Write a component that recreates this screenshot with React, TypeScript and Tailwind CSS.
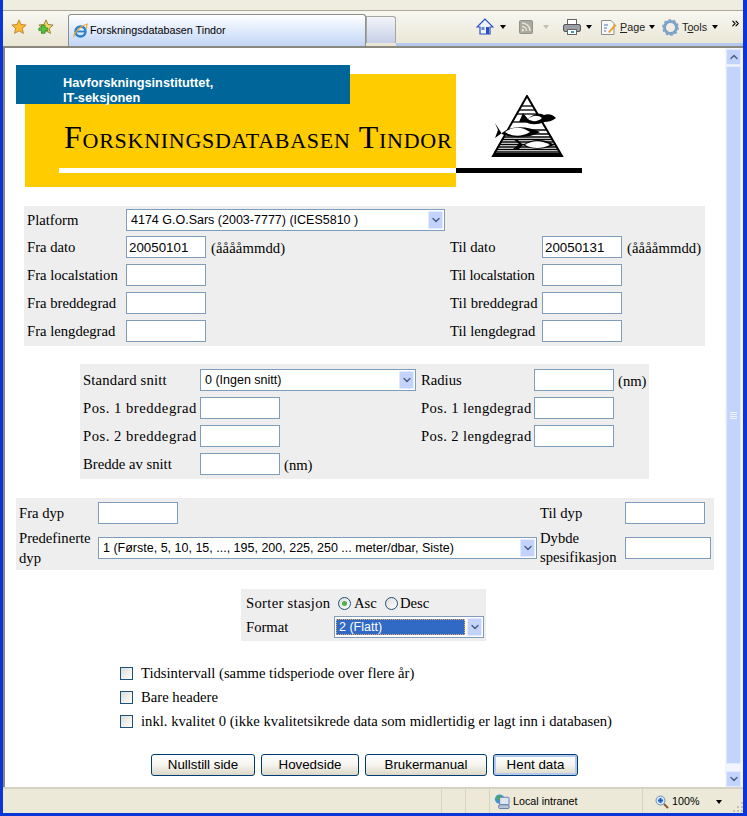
import { ChevronDown, ChevronUp, ChevronsRight } from "lucide-react";
import type { ReactNode } from "react";

const serif = "font-['Liberation_Serif',serif]";

const Input = ({ value = "", className = "w-[80px]" }: { value?: string; className?: string }) => (
  <input
    readOnly
    value={value}
    className={`h-[22px] border border-[#7f9db9] bg-white px-[2px] font-['Liberation_Sans',sans-serif] text-[13.33px] text-black outline-none ${className}`}
  />
);

const ArrowBtn = () => (
  <div className="flex h-[18px] w-[15px] shrink-0 items-center justify-center rounded-[1px] border border-[#e1eafe] bg-[#c3d3fb]">
    <ChevronDown size={12} strokeWidth={3} className="text-[#4d6185]" />
  </div>
);

const Select = ({ value, className, selected }: { value: string; className: string; selected?: boolean }) => (
  <div className={`flex h-[22px] items-center justify-between border border-[#7f9db9] bg-white px-[1px] font-['Liberation_Sans',sans-serif] text-[12.5px] ${className}`}>
    {selected ? (
      <span className="mr-[2px] flex h-[16px] flex-1 items-center border border-dotted border-[#e8b060] bg-[#316ac5] pl-[2px] text-white">{value}</span>
    ) : (
      <span className="pl-[3px] text-black">{value}</span>
    )}
    <ArrowBtn />
  </div>
);

const Label = ({ children, className = "" }: { children: ReactNode; className?: string }) => (
  <span className={`text-[14.67px] leading-[17px] text-black ${className}`}>{children}</span>
);

const Radio = ({ checked }: { checked?: boolean }) => (
  <span className="flex h-[13px] w-[13px] items-center justify-center rounded-full border border-[#1c5180] bg-gradient-to-br from-[#dcdcd7] to-white">
    {checked && <span className="h-[5px] w-[5px] rounded-full bg-[#4cb04c]" />}
  </span>
);

const Check = ({ label }: { label: string }) => (
  <div className="flex h-[24px] items-center">
    <span className="h-[13px] w-[13px] border border-[#1c5180] bg-gradient-to-br from-[#dcdcd7] to-white" />
    <Label className="ml-[8px]">{label}</Label>
  </div>
);

const Btn = ({ label, className, active }: { label: string; className: string; active?: boolean }) => (
  <button className={`h-[22px] rounded-[3px] border border-[#003c74] bg-gradient-to-b from-white via-[#f5f4ee] to-[#dcd8c8] font-['Liberation_Sans',sans-serif] text-[13.33px] text-black ${active ? "shadow-[inset_0_0_0_2px_#b4c9ee]" : ""} ${className}`}>
    {label}
  </button>
);

const Logo = () => (
  <svg width="90" height="64" viewBox="0 0 90 64" className="block">
    <path d="M39 1 L5 61 L74 61 Z" fill="#fff" stroke="#000" strokeWidth="2" />
    {[11, 15, 19, 27, 35, 39, 42, 44.5, 47, 49.5, 52, 54.5, 57].map((y) => {
      const half = (y - 1) * 0.58;
      return <line key={y} x1={39 - half} x2={39 + half} y1={y} y2={y} stroke="#000" strokeWidth="1.3" />;
    })}
    <path d="M5 61 L74 61 L72.5 58 L6.5 58 Z" fill="#000" />
    <path d="M31 27 L35 18 L40 24 C46 18 52 18 56 20 C61 18 65 20 68 23 C64 26 60 27 56 27 C50 30 42 30 38 27 Z" fill="#000" />
    <path d="M40 24 C45 20 50 20 54 23 C50 27 44 27 40 24 Z" fill="#fff" />
    <path d="M7 28 L10 35 L7 43 L14 38 C22 31 38 30 52 37 C42 43 24 44 14 39 Z" fill="#000" />
    <path d="M17 37 C26 31 34 32 42 37 C34 42 24 42 17 37 Z" fill="#fff" />
    <path d="M25 44 L31 49 L25 54 L31 54 L35 50 C44 43 58 44 66 50 C56 55 42 55 35 50 L29 44 Z" fill="#000" />
    <path d="M37 50 C44 45 54 45 62 50 C54 54 44 54 37 50 Z" fill="#fff" />
  </svg>
);

const Star = ({ plus }: { plus?: boolean }) => (
  <svg width="16" height="16" viewBox="0 0 18 18">
    <path d="M9 1 L11.3 6.2 L17 6.8 L12.7 10.6 L14 16.2 L9 13.3 L4 16.2 L5.3 10.6 L1 6.8 L6.7 6.2 Z" fill={plus ? "#f6d76a" : "#fbb934"} stroke={plus ? "#8b7a2e" : "#b9822c"} strokeWidth="1" />
    {plus && <path d="M1 10 H4 V7 H8 V10 H11 V13 H8 V16 H4 V13 H1 Z" fill="#58c33c" stroke="#2f7f1e" strokeWidth="0.8" />}
  </svg>
);

const IeIcon = () => (
  <svg width="16" height="16" viewBox="0 0 16 16" className="shrink-0">
    <circle cx="7.5" cy="8.5" r="5" fill="none" stroke="#2c7fd0" strokeWidth="2.4" />
    <path d="M3 8.5 H12.5" stroke="#2c7fd0" strokeWidth="1.8" />
    <path d="M1 14 C0 11 8 2 15 1 C12 1 15 3 13 6" fill="none" stroke="#e9a72a" strokeWidth="1.2" />
  </svg>
);

const Caret = ({ className = "" }: { className?: string }) => (
  <span className={`block h-0 w-0 shrink-0 border-x-[3px] border-t-[4px] border-x-transparent border-t-black ${className}`} />
);

const BrowserTop = () => (
  <div className="flex h-[48px] shrink-0 flex-col border-b-2 border-[#8a887c] font-['Liberation_Sans',sans-serif] text-[10.75px]">
    <div className="h-[12px] border-b border-[#aca899] bg-[#efeddf]" />
    <div className="flex flex-1 bg-gradient-to-b from-[#f8f7f1] to-[#e9e6d5]">
      <div className="flex w-[65px] shrink-0 items-center gap-[11px] pb-[3px] pl-[8px]">
        <Star />
        <Star plus />
      </div>
      <div className="mt-[3px] flex h-[32px] w-[298px] shrink-0 items-center gap-[1px] rounded-t-[3px] border-x border-t border-[#8e8f8f] bg-gradient-to-b from-white via-[#dfeafb] to-[#c2d5f5] pl-[4px]">
        <IeIcon />
        <span className="text-black">Forskningsdatabasen Tindor</span>
      </div>
      <div className="mt-[5px] h-[27px] w-[30px] shrink-0 rounded-tr-[3px] border-x border-t border-[#a7a6a0] bg-gradient-to-b from-[#f3f5fa] to-[#c5cfe6]" />
      <div className="flex flex-1 flex-col">
        <div className="flex flex-1 items-center pl-[80px] text-[#222]">
          <svg width="18" height="18" viewBox="0 0 18 18" className="shrink-0">
            <path d="M9 1 L1 9 H4 V16 H14 V9 H17 Z" fill="#eef2fb" stroke="#2b4fc0" strokeWidth="1.2" />
            <rect x="10" y="9" width="3" height="7" fill="#2b4fc0" />
            <rect x="5.5" y="9" width="3" height="3" fill="#6a8ad8" />
          </svg>
          <Caret className="ml-[6px]" />
          <svg width="14" height="14" viewBox="0 0 14 14" className="ml-[13px] shrink-0">
            <rect x="0.5" y="0.5" width="13" height="13" rx="1" fill="#aaa99d" stroke="#93928a" />
            <path d="M3 3 A8 8 0 0 1 11 11 M3 6.5 A4.5 4.5 0 0 1 7.5 11" fill="none" stroke="#e6e5dc" strokeWidth="1.5" />
            <circle cx="3.8" cy="10.2" r="1.2" fill="#e6e5dc" />
          </svg>
          <Caret className="ml-[10px] opacity-20" />
          <svg width="20" height="17" viewBox="0 0 18 17" className="ml-[13px] shrink-0">
            <rect x="4.5" y="0.5" width="9" height="6" fill="#fff" stroke="#666" />
            <rect x="0.5" y="5.5" width="17" height="7" rx="1.5" fill="#9aa0a6" stroke="#555" />
            <rect x="4.5" y="10.5" width="9" height="5" fill="#fff" stroke="#666" />
            <rect x="8" y="12" width="3" height="2" fill="#2aa0c8" />
          </svg>
          <Caret className="ml-[4px]" />
          <svg width="17" height="17" viewBox="0 0 17 17" className="ml-[8px] shrink-0">
            <path d="M1.5 1.5 H11 L14 4.5 V15.5 H1.5 Z" fill="#f7f7f7" stroke="#8d8d8d" />
            <path d="M4 6 H8 M4 9 H7 M4 12 H6" stroke="#4a77c8" strokeWidth="1.2" />
            <path d="M8 13 L15 5 L16.5 6.5 L9.5 14 Z" fill="#e8a030" />
          </svg>
          <span className="ml-[3px] w-[23px]"><u>P</u>age</span>
          <Caret className="ml-[6px]" />
          <svg width="17" height="17" viewBox="0 0 17 17" className="ml-[7px] shrink-0">
            <circle cx="8.5" cy="8.5" r="6" fill="none" stroke="#7ea3c8" strokeWidth="3" />
            <circle cx="8.5" cy="8.5" r="7.6" fill="none" stroke="#7ea3c8" strokeWidth="1.6" strokeDasharray="2.4 2.4" />
          </svg>
          <span className="ml-[3px] w-[25px]">T<u>o</u>ols</span>
          <Caret className="ml-[5px]" />
          <ChevronsRight size={11} strokeWidth={2.4} className="mb-[7px] ml-[12px] shrink-0 text-black" />
        </div>
        <div className="h-[3px] bg-[#b5c8ed]" />
      </div>
    </div>
  </div>
);

const Scrollbar = () => (
  <div className="flex w-[17px] shrink-0 flex-col items-center bg-[#f2f5fc] pt-[1px]">
    <div className="flex h-[16px] w-[15px] shrink-0 items-center justify-center rounded-[1px] border border-[#e1eafe] bg-[#c3d3fb]">
      <ChevronUp size={12} strokeWidth={3} className="text-[#4d6185]" />
    </div>
    <div className="mt-[1px] flex w-[15px] flex-1 flex-col items-center justify-center gap-[1px] rounded-[1px] border border-[#e1eafe] bg-[#c3d4fb]">
      {[0, 1, 2, 3].map((i) => <span key={i} className="h-[1px] w-[7px] bg-[#eef3fe]" />)}
    </div>
    <div className="mt-[7px] flex h-[16px] w-[15px] shrink-0 items-center justify-center rounded-[1px] border border-[#e1eafe] bg-[#c3d3fb]">
      <ChevronDown size={12} strokeWidth={3} className="text-[#4d6185]" />
    </div>
  </div>
);

const Header = () => (
  <div className="relative ml-[11px] h-[122px] w-[570px]">
    <div className="absolute left-[9px] top-[9px] flex h-[113px] w-[431px] items-center whitespace-nowrap bg-[#ffcc00] pl-[39px] pt-[13px]">
      <span className="text-[32px] leading-[36px] tracking-[0.73px] text-black [font-variant:small-caps]">Forskningsdatabasen Tindor</span>
    </div>
    <div className="absolute left-0 top-0 h-[39px] w-[334px] bg-[#006699] pl-[47px] pt-[10px] font-['Liberation_Sans',sans-serif] text-[12.75px] font-bold leading-[15px] text-white">
      Havforskningsinstituttet,
      <br />
      IT-seksjonen
    </div>
    <div className="absolute left-[43px] top-[103px] h-[5px] w-[397px] bg-white" />
    <div className="absolute left-[440px] top-[103px] h-[5px] w-[126px] bg-black" />
    <div className="absolute left-[472px] top-[30px]"><Logo /></div>
  </div>
);

const StatusBar = () => (
  <div className="flex h-[26px] shrink-0 border-t-2 border-[#d6d3c3] bg-[#ece9d8] font-['Liberation_Sans',sans-serif] text-[10.75px] text-black">
    <div className="w-[438px] shrink-0" />
    <div className="w-[24px] shrink-0 border-l border-[#d6d3c3]" />
    <div className="w-[24px] shrink-0 border-l border-[#d6d3c3]" />
    <div className="flex w-[153px] shrink-0 items-center gap-[3px] border-l border-[#d6d3c3] pl-[4px] pt-[1px]">
      <svg width="16" height="17" viewBox="0 0 17 17">
        <circle cx="6" cy="6" r="5" fill="#3a9ad9" />
        <path d="M3 3 L7 2 L8 6 L4 8 Z" fill="#49ab3a" />
        <rect x="6" y="4" width="10" height="8" rx="1" fill="#dfe6f2" stroke="#5e7ba8" />
        <rect x="5" y="12" width="11" height="4" rx="1" fill="#b8c4d8" stroke="#5e7ba8" />
      </svg>
      <span>Local intranet</span>
    </div>
    <div className="flex flex-1 items-center border-l border-[#d6d3c3] pl-[12px] pt-[1px]">
      <svg width="14" height="14" viewBox="0 0 14 14" className="shrink-0">
        <circle cx="5.5" cy="5.5" r="4.5" fill="#dbe8fb" stroke="#6a8db8" />
        <path d="M3 5.5 H8 M5.5 3 V8" stroke="#1f5fc4" strokeWidth="2" />
        <path d="M9 9 L13 13" stroke="#8a5a2c" strokeWidth="2" />
      </svg>
      <span className="ml-[3px]">100%</span>
      <Caret className="ml-[16px]" />
      <svg width="11" height="11" viewBox="0 0 11 11" className="ml-auto mt-[10px] shrink-0">
        <path d="M9 1 h2 v2 h-2 z M5 5 h2 v2 h-2 z M9 5 h2 v2 h-2 z M1 9 h2 v2 h-2 z M5 9 h2 v2 h-2 z M9 9 h2 v2 h-2 z" fill="#c4c1ae" />
      </svg>
    </div>
  </div>
);

export default function App() {
  return (
    <div className={`flex h-[816px] w-[747px] flex-col overflow-hidden bg-[#0a36d8] ${serif}`}>
      <div className="flex min-h-0 flex-1 flex-col pl-[3px] pr-[4px]">
        <BrowserTop />
        <div className="flex min-h-0 flex-1 border-l-2 border-[#8a887c]">
          <main className="relative min-w-0 flex-1 bg-white pt-[17px]">
            <Header />

            <div className="ml-[19px] mt-[19px] flex h-[140px] w-[681px] flex-col gap-[6px] bg-[#eeeeee] pl-[3px] pt-[3px]">
              <div className="-mb-[1px] flex items-center">
                <Label className="w-[99px]">Platform</Label>
                <Select value="4174 G.O.Sars (2003-7777) (ICES5810 )" className="w-[319px]" />
              </div>
              <div className="flex items-center">
                <Label className="w-[99px]">Fra dato</Label>
                <Input value="20050101" />
                <Label className="ml-[5px] mt-[2px] w-[239px] tracking-[0.1px]">(ååååmmdd)</Label>
                <Label className="w-[92px]">Til dato</Label>
                <Input value="20050131" />
                <Label className="ml-[5px] mt-[2px] tracking-[0.1px]">(ååååmmdd)</Label>
              </div>
              <div className="flex items-center">
                <Label className="w-[99px]">Fra localstation</Label>
                <Input />
                <span className="w-[244px]" />
                <Label className="w-[92px] whitespace-nowrap tracking-[-0.2px]">Til localstation</Label>
                <Input />
              </div>
              <div className="flex items-center">
                <Label className="w-[99px]">Fra breddegrad</Label>
                <Input />
                <span className="w-[244px]" />
                <Label className="w-[92px] whitespace-nowrap tracking-[0.1px]">Til breddegrad</Label>
                <Input />
              </div>
              <div className="flex items-center">
                <Label className="w-[99px]">Fra lengdegrad</Label>
                <Input />
                <span className="w-[244px]" />
                <Label className="w-[92px] whitespace-nowrap">Til lengdegrad</Label>
                <Input />
              </div>
            </div>

            <div className="ml-[75px] mt-[18px] flex h-[115px] w-[569px] flex-col gap-[6px] bg-[#eeeeee] pl-[3px] pt-[5px]">
              <div className="flex items-center">
                <Label className="w-[117px] tracking-[0.2px]">Standard snitt</Label>
                <Select value="0 (Ingen snitt)" className="w-[216px]" />
                <Label className="ml-[5px] w-[113px]">Radius</Label>
                <Input />
                <Label className="ml-[4px] mt-[2px]">(nm)</Label>
              </div>
              {[
                ["Pos. 1 breddegrad", "Pos. 1 lengdegrad"],
                ["Pos. 2 breddegrad", "Pos. 2 lengdegrad"],
              ].map(([a, b]) => (
                <div key={a} className="flex items-center">
                  <Label className="w-[117px] whitespace-nowrap tracking-[0.5px]">{a}</Label>
                  <Input />
                  <span className="w-[141px]" />
                  <Label className="w-[113px] whitespace-nowrap tracking-[0.35px]">{b}</Label>
                  <Input />
                </div>
              ))}
              <div className="flex items-center">
                <Label className="w-[117px]">Bredde av snitt</Label>
                <Input />
                <Label className="ml-[4px] mt-[2px]">(nm)</Label>
              </div>
            </div>

            <div className="ml-[11px] mt-[19px] flex h-[72px] w-[698px] flex-col gap-[13px] bg-[#eeeeee] pl-[3px] pt-[4px]">
              <div className="flex items-center">
                <Label className="w-[79px]">Fra dyp</Label>
                <Input />
                <span className="w-[362px]" />
                <Label className="w-[85px]">Til dyp</Label>
                <Input />
              </div>
              <div className="flex h-[22px] items-center">
                <Label className="w-[79px] leading-[20px]">Predefinerte dyp</Label>
                <Select value="1 (Første, 5, 10, 15, ..., 195, 200, 225, 250 ... meter/dbar, Siste)" className="w-[439px]" />
                <Label className="ml-[3px] w-[85px] leading-[19px]">Dybde spesifikasjon</Label>
                <Input className="w-[86px]" />
              </div>
            </div>

            <div className="ml-[236px] mt-[19px] flex h-[52px] w-[245px] flex-col bg-[#eeeeee] pl-[5px] pt-[3px]">
              <div className="flex h-[23px] items-center">
                <Label className="w-[92px] tracking-[0.3px]">Sorter stasjon</Label>
                <Radio checked />
                <Label className="ml-[3px] w-[31px]">Asc</Label>
                <Radio />
                <Label className="ml-[2px]">Desc</Label>
              </div>
              <div className="mt-[1px] flex items-center">
                <Label className="w-[88px]">Format</Label>
                <Select value="2 (Flatt)" selected className="w-[150px]" />
              </div>
            </div>

            <div className="ml-[115px] mt-[20px] flex flex-col">
              <Check label="Tidsintervall (samme tidsperiode over flere år)" />
              <Check label="Bare headere" />
              <Check label="inkl. kvalitet 0 (ikke kvalitetsikrede data som midlertidig er lagt inn i databasen)" />
            </div>

            <div className="ml-[146px] mt-[21px] flex gap-[6px]">
              <Btn label="Nullstill side" className="w-[104px]" />
              <Btn label="Hovedside" className="w-[98px]" />
              <Btn label="Brukermanual" className="w-[122px]" />
              <Btn label="Hent data" className="w-[85px]" active />
            </div>
          </main>
          <Scrollbar />
          <div className="w-[1px] shrink-0 bg-[#f2f5fc]" />
        </div>
        <StatusBar />
      </div>
      <div className="h-[3px] shrink-0" />
    </div>
  );
}
